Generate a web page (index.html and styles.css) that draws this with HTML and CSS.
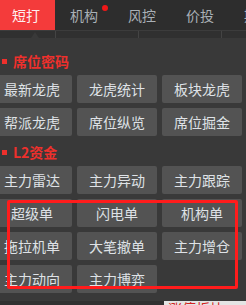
FILE: index.html
```html
<!DOCTYPE html>
<html lang="zh">
<head>
<meta charset="utf-8">
<link rel="stylesheet" href="styles.css">
</head>
<body>
<div class="page">
  <nav class="tabs">
    <div class="tab active">短打</div>
    <div class="tab">机构<span class="dot"></span></div>
    <div class="tab">风控</div>
    <div class="tab">价投</div>
    <div class="tab">期权</div>
  </nav>
  <div class="strip">
    <div class="cell c1"></div>
    <div class="cell c2"></div>
    <div class="cell c3"></div>
    <div class="cell c4"></div>
  </div>
  <div class="panel">
    <span class="arrow"></span>
    <div class="title"><span class="sq"></span>席位密码</div>
    <div class="grid">
      <div class="btn">最新龙虎</div>
      <div class="btn">龙虎统计</div>
      <div class="btn">板块龙虎</div>
      <div class="btn">帮派龙虎</div>
      <div class="btn">席位纵览</div>
      <div class="btn">席位掘金</div>
    </div>
    <div class="title second"><span class="sq"></span>L2资金</div>
    <div class="grid">
      <div class="btn">主力雷达</div>
      <div class="btn">主力异动</div>
      <div class="btn">主力跟踪</div>
      <div class="btn">超级单</div>
      <div class="btn">闪电单</div>
      <div class="btn">机构单</div>
      <div class="btn">拖拉机单</div>
      <div class="btn">大笔撤单</div>
      <div class="btn">主力增仓</div>
      <div class="btn">主力动向</div>
      <div class="btn">主力博弈</div>
    </div>
    <div class="highlight"></div>
  </div>
  <div class="bottom">
    <div class="b-dark"></div>
    <div class="b-light"><span>涨停板块</span></div>
  </div>
</div>
</body>
</html>
```
FILE: styles.css
```css
* { box-sizing: border-box; }
html, body {
  margin: 0;
  padding: 0;
  background: #393939;
  overflow: hidden;
}
body {
  width: 246px;
  height: 305px;
  font-family: "Noto Sans CJK SC", "Noto Sans", sans-serif;
}
.page {
  position: relative;
  width: 246px;
  height: 305px;
  overflow: hidden;
}
.tabs {
  display: flex;
  height: 30px;
  background: #2d2d2d;
  margin-left: -3px;
}
.tab {
  position: relative;
  flex: 0 0 58px;
  text-align: center;
  line-height: 30px;
  font-size: 14px;
  color: #a9b0b6;
  white-space: nowrap;
}
.tab.active {
  background: #f43b3b;
  color: #fff0f0;
}
.dot {
  position: absolute;
  left: 47px;
  top: 5px;
  width: 6px;
  height: 6px;
  border-radius: 50%;
  background: #f01818;
}
.strip {
  display: flex;
  height: 8px;
  background: #303030;
  border-top: 1px solid #3c3c3c;
}
.cell {
  border-right: 1px solid #444;
  height: 100%;
}
.c1 { flex: 0 0 56px; }
.c2 { flex: 0 0 83px; }
.c3 { flex: 0 0 83px; }
.c4 { flex: 1; border-right: none; }
.panel {
  position: relative;
  background: #393939;
  padding-top: 13px;
  height: 263px;
}
.arrow {
  position: absolute;
  left: 31px;
  top: -6px;
  width: 0;
  height: 0;
  border-left: 4px solid transparent;
  border-right: 4px solid transparent;
  border-bottom: 6px solid #393939;
}
.title {
  display: flex;
  align-items: center;
  height: 20px;
  margin-bottom: 4px;
  font-size: 14px;
  font-weight: bold;
  color: #ee302c;
}
.title.second {
  margin-top: 6px;
}
.sq {
  width: 5px;
  height: 5px;
  background: #ee302c;
  margin-left: 2px;
  margin-right: 6px;
}
.grid {
  display: grid;
  grid-template-columns: 80px 80px 80px;
  grid-auto-rows: 28px;
  column-gap: 5px;
  row-gap: 5px;
  margin-left: -8px;
}
.btn {
  background: #535353;
  border-radius: 2px;
  color: #dfe2e6;
  font-size: 14px;
  display: flex;
  align-items: center;
  justify-content: center;
  white-space: nowrap;
}
.highlight {
  position: absolute;
  left: 7px;
  top: 162px;
  width: 231px;
  height: 89px;
  border: 3px solid #ff1c1c;
  border-radius: 2px;
}
.bottom {
  display: flex;
  height: 4px;
  overflow: hidden;
}
.b-dark {
  flex: 0 0 164px;
  background: #303030;
}
.b-light {
  flex: 1;
  background: #e4e4e4;
  overflow: hidden;
  font-size: 14px;
  line-height: 14px;
  color: #d42020;
  padding-left: 4px;
  white-space: nowrap;
}
```
